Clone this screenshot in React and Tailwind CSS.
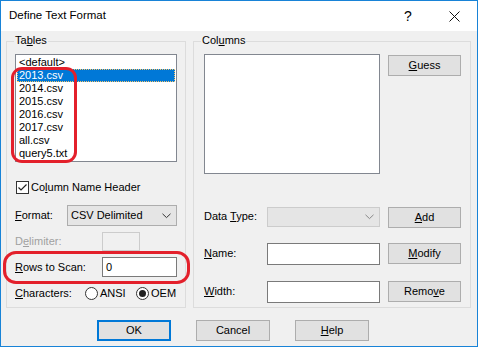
import React from "react";

function Btn({ children, w = "w-[74px]", primary = false }) {
  return (
    <div
      className={`${w} h-[21px] flex items-center justify-center bg-[#e1e1e1] ${
        primary ? "border-2 border-[#0078d7]" : "border border-[#adadad]"
      }`}
    >
      {children}
    </div>
  );
}

function Chevron({ color = "#333" }) {
  return (
    <svg width="9" height="6" viewBox="0 0 9 6">
      <polyline points="0.5,0.8 4.5,4.6 8.5,0.8" fill="none" stroke={color} strokeWidth="1" />
    </svg>
  );
}

function Group({ label, className, children }) {
  return (
    <div className={`relative border border-[#dcdcdc] h-[267px] ${className}`}>
      <span className="absolute -top-[8px] left-[7px] px-[1px] bg-[#f0f0f0] leading-[13px]">{label}</span>
      {children}
    </div>
  );
}

const tables = ["<default>", "2013.csv", "2014.csv", "2015.csv", "2016.csv", "2017.csv", "all.csv", "query5.txt"];

export default function App() {
  return (
    <div className="relative w-[478px] h-[347px] border border-[#1883d7] flex flex-col bg-white text-[11px] text-black font-['Liberation_Sans',Arial,sans-serif] overflow-hidden">
      {/* title bar */}
      <div className="h-[30px] flex items-center bg-white shrink-0">
        <span className="pl-[8px] text-[11.5px]">Define Text Format</span>
        <div className="ml-auto flex h-full">
          <div className="w-[46px] flex items-center justify-center text-[14px]">?</div>
          <div className="w-[46px] flex items-center justify-center">
            <svg width="11" height="11" viewBox="0 0 11 11">
              <path d="M0.5 0.5 L10.5 10.5 M10.5 0.5 L0.5 10.5" stroke="#111" strokeWidth="1" />
            </svg>
          </div>
        </div>
      </div>

      {/* client area */}
      <div className="flex-1 bg-[#f0f0f0] px-[5px] pt-[10px]">
        <div className="flex gap-[7px]">
          <Group
            label={<>Ta<u>b</u>les</>}
            className="w-[180px]"
          >
            <div className="flex flex-col pl-[8px] pt-[12px]">
              <div className="w-[162px] h-[108px] border border-[#828790] bg-white p-[1px]">
                {tables.map((t, i) => (
                  <div
                    key={t}
                    className={`h-[13px] leading-[13px] pl-[2px] ${
                      i === 1 ? "bg-[#0078d7] text-white outline outline-1 outline-dotted outline-[#f5c46b] -outline-offset-1" : ""
                    }`}
                  >
                    {t}
                  </div>
                ))}
              </div>

              <div className="mt-[19px] h-[13px] flex items-center pl-[1px]">
                <div className="w-[13px] h-[13px] border border-[#333] bg-white flex items-center justify-center">
                  <svg width="11" height="11" viewBox="0 0 11 11">
                    <polyline points="1.5,5.5 4,8 9.5,2.5" fill="none" stroke="#222" strokeWidth="1.2" />
                  </svg>
                </div>
                <span className="ml-[2px]">Co<u>l</u>umn Name Header</span>
              </div>

              <div className="mt-[11px] h-[21px] flex items-center">
                <span className="w-[52px]"><u>F</u>ormat:</span>
                <div className="w-[110px] h-[21px] bg-[#e5e5e5] border border-[#adadad] flex items-center pl-[3px] pr-[5px]">
                  <span>CSV Delimited</span>
                  <span className="ml-auto flex"><Chevron /></span>
                </div>
              </div>

              <div className="mt-[6px] h-[19px] flex items-center">
                <span className="w-[87px] text-[#a0a0a0]">D<u>e</u>limiter:</span>
                <div className="w-[38px] h-[19px] border border-[#cccccc] bg-[#f0f0f0]" />
              </div>

              <div className="mt-[6px] h-[20px] flex items-center">
                <span className="w-[87px]"><u>R</u>ows to Scan:</span>
                <div className="w-[75px] h-[20px] border border-[#7a7a7a] bg-white flex items-center pl-[3px]">0</div>
              </div>

              <div className="mt-[9px] h-[14px] flex items-center">
                <span className="w-[70px]"><u>C</u>haracters:</span>
                <div className="w-[51px] flex items-center">
                  <div className="w-[13px] h-[13px] rounded-full border border-[#333] bg-white" />
                  <span className="ml-[2px]">ANSI</span>
                </div>
                <div className="flex items-center">
                  <div className="w-[13px] h-[13px] rounded-full border border-[#333] bg-white flex items-center justify-center">
                    <div className="w-[7px] h-[7px] rounded-full bg-[#222]" />
                  </div>
                  <span className="ml-[2px]">OEM</span>
                </div>
              </div>
            </div>
          </Group>

          <Group
            label={<>Col<u>u</u>mns</>}
            className="w-[278px]"
          >
            <div className="flex flex-col pl-[10px] pt-[12px]">
              <div className="flex gap-[8px]">
                <div className="w-[176px] h-[120px] border border-[#828790] bg-white" />
                <div className="mt-[1px]">
                  <Btn w="w-[73px]"><span><u>G</u>uess</span></Btn>
                </div>
              </div>

              <div className="mt-[32px] h-[21px] flex items-center">
                <span className="w-[63px]">Data <u>T</u>ype:</span>
                <div className="w-[113px] h-[20px] bg-[#e5e5e5] border border-[#cccccc] flex items-center justify-end pr-[5px]">
                  <Chevron color="#888" />
                </div>
                <div className="ml-[8px] mt-[2px]">
                  <Btn w="w-[73px]"><span><u>A</u>dd</span></Btn>
                </div>
              </div>

              <div className="mt-[16px] h-[21px] flex items-center">
                <span className="w-[63px]"><u>N</u>ame:</span>
                <div className="w-[113px] h-[22px] bg-white border border-[#7a7a7a]" />
                <div className="ml-[8px]">
                  <Btn w="w-[73px]"><span><u>M</u>odify</span></Btn>
                </div>
              </div>

              <div className="mt-[17px] h-[21px] flex items-center">
                <span className="w-[63px]"><u>W</u>idth:</span>
                <div className="w-[113px] h-[22px] bg-white border border-[#7a7a7a]" />
                <div className="ml-[8px]">
                  <Btn w="w-[73px]"><span>Remo<u>v</u>e</span></Btn>
                </div>
              </div>
            </div>
          </Group>
        </div>

        <div className="flex mt-[12px] pl-[91px] gap-[25px]">
          <Btn primary>OK</Btn>
          <Btn>Cancel</Btn>
          <Btn><span><u>H</u>elp</span></Btn>
        </div>
      </div>

      {/* red annotations */}
      <div className="absolute left-[10px] top-[66px] w-[66px] h-[96px] border-[3px] border-[#e3202b] rounded-[11px]" />
      <div className="absolute left-[2px] top-[250px] w-[187px] h-[33px] border-[3px] border-[#e3202b] rounded-[13px]" />
    </div>
  );
}
